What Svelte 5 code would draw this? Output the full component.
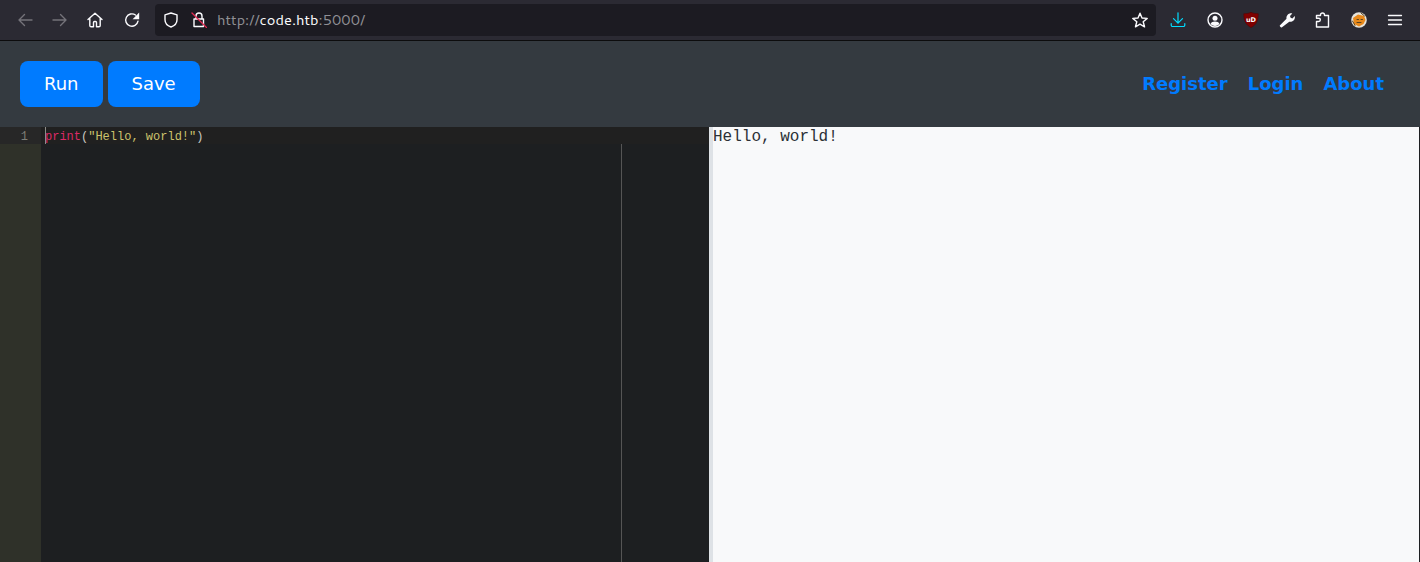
<script>
	let code = 'print';
</script>

<div class="page">
	<div class="chrome">
		<div class="nav-icons">
			<button class="tool dim" aria-label="Back">
				<svg viewBox="0 0 16 16"><path d="M15 8H2M7.500 2.500 2 8l5.500 5.500" /></svg>
			</button>
			<button class="tool dim" aria-label="Forward">
				<svg viewBox="0 0 16 16"><path d="M1 8h13M8.500 2.500 14 8l-5.500 5.500" /></svg>
			</button>
			<button class="tool" aria-label="Home">
				<svg viewBox="0 0 16 16"><path d="M1 7.500 8 1.200l7 6.300M2.800 6v7.500a1.300 1.300 0 0 0 1.300 1.300h2.400v-4.300a1 1 0 0 1 1-1h1a1 1 0 0 1 1 1v4.300h2.400a1.300 1.300 0 0 0 1.300-1.300V6" /></svg>
			</button>
			<button class="tool reload" aria-label="Reload">
				<svg viewBox="0 0 16 16"><path d="M14 9.200A6.200 6.200 0 1 1 11.500 3" /><path class="solid" d="M15.200.600V7.200H8.600z" /></svg>
			</button>
		</div>
		<div class="urlbar">
			<svg class="shield" viewBox="0 0 16 16"><path d="M8 1 2 2.800v5C2 11.500 5 14 8 15c3-1 6-3.500 6-7.200v-5z" /></svg>
			<svg class="lock" viewBox="0 0 16 16">
				<path d="M5 7V4a3 3 0 0 1 6 0v3M3 7h9.500v7.500H3z" />
				<path class="strike" d="M1 1l14.500 14.500" />
			</svg>
			<span class="url"><span class="fade">http://</span>code.htb<span class="fade">:5000/</span></span>
			<svg class="star" viewBox="0 0 16 16"><path d="M8 1.200 10 6l5.200.4-4 3.400 1.300 5L8 12.200l-4.500 2.600 1.300-5-4-3.400L6 6z" /></svg>
		</div>
		<div class="ext-icons">
			<svg class="ext download" viewBox="0 0 16 16"><path d="M8 .800v10.400M3.500 6.700 8 11.200l4.500-4.500M1.200 11.500v1.600a1.400 1.400 0 0 0 1.400 1.400h10.800a1.400 1.400 0 0 0 1.400-1.400v-1.600" /></svg>
			<svg class="ext" viewBox="0 0 16 16">
				<circle cx="8" cy="8" r="7" />
				<circle class="solid" cx="8" cy="6.300" r="2.500" />
				<path class="solid" d="M3.500 12c.8-1.800 2.500-2.500 4.500-2.500s3.700.7 4.500 2.500a6 6 0 0 1-9 0z" />
			</svg>
			<svg class="ext ublock" viewBox="0 0 16 16">
				<path d="M8 .500c2 .8 4.500 1.300 7.200 1.300 0 6.500-1.700 11-7.200 13.700C2.500 12.800.8 8.300.8 1.800 3.500 1.800 6 1.300 8 .500z" />
				<text x="8" y="9.800">uD</text>
			</svg>
			<svg class="ext" viewBox="0 0 16 16">
				<path class="solid" d="M1 13.200 7.500 6.800C7 4 9 1 12.500 1.200l.8.300-2.300 2.500.6 1.800 1.800.6 2.300-2.300.2.800c.2 3.300-2.700 5.400-5.600 4.800L3 15.200c-1 .8-2.900-.9-2-2z" />
			</svg>
			<svg class="ext" viewBox="0 0 16 16"><path d="M1.500 15V9.500h2.200a1.600 1.600 0 0 0 0-3.300H1.500V3.500h4V3a2 2 0 0 1 4 0v.5h4V15z" /></svg>
			<svg class="ext fox" viewBox="0 0 16 16">
				<circle cx="8" cy="8" r="7.800" />
				<path class="patch" d="M2 6l5-3.500 6 1.500 1.500 4-2 4-4.500 2.500L3 12z" />
				<path class="glint" d="M10 1l3.500 3M1.500 9l2.500 4.500M6 7.500h1.500M10 7.500h1.500M6 10.500h4" />
			</svg>
			<svg class="ext menu" viewBox="0 0 16 16"><path d="M1.500 3.500h13M1.500 8h13M1.500 12.500h13" /></svg>
		</div>
	</div>

	<header class="topbar">
		<div class="actions">
			<button class="btn run">Run</button>
			<button class="btn save">Save</button>
		</div>
		<nav class="links">
			<a href="#register">Register</a>
			<a href="#login">Login</a>
			<a href="#about">About</a>
		</nav>
	</header>

	<main class="split">
		<section class="editor">
			<div class="gutter">
				<div class="gutter-active">1</div>
			</div>
			<div class="lines">
				<div class="line-active">
					<span class="cursor"></span><span class="kw">{code}</span><span class="paren">(</span><span class="str">"Hello, world!"</span><span class="paren">)</span>
				</div>
				<div class="rest">
					<div class="margin-line"></div>
				</div>
			</div>
		</section>
		<div class="divider"></div>
		<section class="output">Hello, world!</section>
		<div class="edge"></div>
	</main>
</div>

<style>
	:global(body) {
		margin: 0;
		background: #1d1f21;
		overflow: hidden;
	}

	.page {
		width: 1420px;
		height: 562px;
		display: flex;
		flex-direction: column;
		overflow: hidden;
	}

	.chrome {
		flex: none;
		box-sizing: border-box;
		display: flex;
		align-items: center;
		background: #2b2a33;
		border-bottom: 1px solid #0c0c0d;
		height: 41px;
		padding-bottom: 1px;
	}

	.nav-icons {
		display: flex;
		align-items: center;
		padding-left: 7px;
	}

	.tool {
		width: 35px;
		height: 32px;
		padding: 0;
		background: none;
		border: 0;
		display: grid;
		place-items: center;
	}

	.reload {
		margin-left: 2px;
	}

	.tool svg,
	.shield,
	.lock,
	.star,
	.ext {
		width: 16px;
		height: 16px;
		flex: none;
		fill: none;
		stroke: #fbfbfe;
		stroke-width: 1.400;
		stroke-linejoin: round;
		stroke-linecap: round;
	}

	.tool.dim svg {
		stroke: #74737a;
	}

	.solid {
		fill: #fbfbfe;
		stroke: none;
	}

	.urlbar {
		width: 1001px;
		height: 32px;
		margin-left: 6px;
		flex: none;
		box-sizing: border-box;
		background: #1c1b22;
		border-radius: 4px;
		display: flex;
		align-items: center;
		padding: 0 8px;
		font-family: Cantarell, "Noto Sans", "DejaVu Sans", sans-serif;
		font-size: 14.700px;
		color: #fbfbfe;
	}

	.lock {
		margin-left: 12px;
	}

	.strike {
		stroke: #e22850;
		stroke-width: 1.300;
	}

	.url {
		margin-left: 10px;
		flex: 1;
	}

	.fade {
		color: #8f8f94;
	}

	.ext-icons {
		display: flex;
		align-items: center;
		gap: 20px;
		margin-left: 14px;
	}

	.download {
		stroke: #00ddff;
		stroke-width: 1.200;
		margin-right: 1px;
	}

	.ublock path {
		fill: #800000;
		stroke: #5a0000;
		stroke-width: 0.600;
	}

	.ublock text {
		fill: #fff;
		stroke: none;
		font: 700 6.500px "DejaVu Sans", sans-serif;
		text-anchor: middle;
	}

	.fox {
		stroke: none;
	}

	.fox circle {
		fill: #e6e3dc;
	}

	.fox .patch {
		fill: #e8891c;
	}

	.fox .glint {
		stroke: #5a4420;
		stroke-width: 1;
	}

	.menu {
		stroke-width: 1.300;
	}

	.topbar {
		height: 86px;
		flex: none;
		box-sizing: border-box;
		background: #343a40;
		display: flex;
		align-items: center;
		justify-content: space-between;
		padding: 0 36px 0 20px;
		font-family: "DejaVu Sans", sans-serif;
	}

	.actions {
		display: flex;
		gap: 5px;
	}

	.btn {
		height: 46px;
		padding: 0 24px 2px;
		border: 0;
		border-radius: 8px;
		background: #007bff;
		color: #fff;
		font: 400 18px "DejaVu Sans", sans-serif;
	}

	.links {
		display: flex;
		gap: 20px;
		margin-bottom: 2px;
	}

	.links a {
		color: #007bff;
		font-size: 18px;
		font-weight: 700;
		text-decoration: none;
	}

	.split {
		flex: 1;
		min-height: 0;
		display: flex;
	}

	.editor {
		width: 709px;
		flex: none;
		display: flex;
		background: #1d1f21;
		font: 12px/21px "Liberation Mono", monospace;
	}

	.gutter {
		width: 41px;
		flex: none;
		background: #2f3129;
		color: #7d7e78;
	}

	.gutter-active {
		height: 17px;
		background: #272727;
		box-sizing: border-box;
		padding-right: 13px;
		text-align: right;
	}

	.lines {
		flex: 1;
		display: flex;
		flex-direction: column;
	}

	.line-active {
		height: 17px;
		flex: none;
		background: #202020;
		padding-left: 4px;
		position: relative;
		white-space: pre;
	}

	.cursor {
		position: absolute;
		left: 4px;
		top: 0;
		width: 1px;
		height: 17px;
		background: #f8f8f0;
		opacity: 0.500;
	}

	.kw {
		color: #dc2a66;
	}

	.paren {
		color: #c8c8c2;
	}

	.str {
		color: #cdc36c;
	}

	.rest {
		flex: 1;
		padding-left: 580px;
	}

	.margin-line {
		width: 1px;
		height: 100%;
		background: #555;
	}

	.divider {
		width: 4px;
		flex: none;
		background: #dee2e6;
	}

	.output {
		flex: 1;
		background: #f8f9fa;
		color: #2b3035;
		font: 16px/18px "Liberation Mono", monospace;
		padding-top: 1px;
		white-space: pre;
	}

	.edge {
		width: 1px;
		flex: none;
		background: #1d1f21;
	}
</style>
